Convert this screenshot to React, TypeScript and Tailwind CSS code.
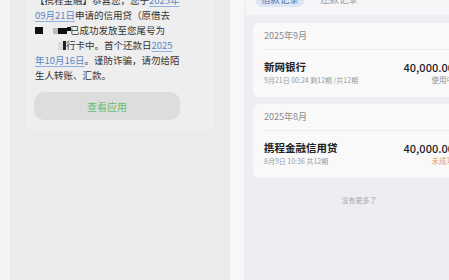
import React from "react";

const font = { fontFamily: '"Noto Sans CJK SC", "Noto Sans", sans-serif' };

function Link({ children }: { children: React.ReactNode }) {
  return <span className="text-[#5a86c9] underline decoration-[#8fb0de] underline-offset-2">{children}</span>;
}

function Block({ w, h, c, mt }: { w: string; h: string; c: string; mt?: string }) {
  return <span className={`inline-block align-middle ${w} ${h} ${c} ${mt ?? ""}`} />;
}

function RecordCard({
  month,
  name,
  sub,
  status,
  statusClass,
  mt,
}: {
  month: string;
  name: string;
  sub: string;
  status: string;
  statusClass: string;
  mt: string;
}) {
  return (
    <div className={`${mt} w-[212px] rounded-[6px] bg-[#f9f9fa] px-[11px] pb-[11px]`}>
      <div className="flex h-[27px] items-center border-b border-[#ebecef] text-[9px] text-[#8b8b8b]">{month}</div>
      <div className="flex items-center justify-between pt-[10px]">
        <div className="flex flex-col">
          <span className="text-[10.5px] font-bold leading-[14px] text-[#222]">{name}</span>
          <span className="text-[7px] leading-[12px] text-[#9a9a9a]">{sub}</span>
        </div>
        <div className="flex flex-col items-end">
          <span className="text-[11px] font-medium leading-[14px] text-[#1d1d1d]">40,000.00</span>
          <span className={`text-[7.5px] leading-[12px] ${statusClass}`}>{status}</span>
        </div>
      </div>
    </div>
  );
}

export default function App() {
  return (
    <div className="flex h-[280px] w-[449px] overflow-hidden bg-[#f4f4f4]" style={font}>
      <div className="w-[10px] shrink-0 bg-[#f4f4f4]" />
      <div className="w-[220px] shrink-0 bg-[#ebebeb] px-[16px]">
        <div className="-mt-[7px] rounded-b-[10px] border border-t-0 border-[#f0f0f0] bg-[#eeeeee] pb-[10px] pl-[7px] pr-[10px]">
          <div className="pl-[1px] text-[9.5px] leading-[15px] text-[#333]">
            <div>【携程金融】恭喜您，您于<Link>2025年</Link></div>
            <div><Link>09月21日</Link>申请的信用贷（原借去</div>
            <div className="flex items-center">
              <Block w="w-[8px]" h="h-[7px]" c="bg-[#111]" />
              <span className="w-[10px]" />
              <Block w="w-[5px]" h="h-[6px]" c="bg-[#bbb]" />
              <Block w="w-[9px]" h="h-[6px]" c="bg-[#111]" />
              <Block w="w-[4px]" h="h-[4px]" c="bg-[#111]" mt="-mt-[4px]" />
              <span className="-ml-[1px]">已成功发放至您尾号为</span>
            </div>
            <div className="flex items-center pl-[23px]">
              <Block w="w-[5px]" h="h-[8px]" c="bg-[#dcdcdc]" />
              <Block w="w-[3px]" h="h-[9px]" c="bg-[#222]" />
              <span>行卡中。首个还款日<Link>2025</Link></span>
            </div>
            <div><Link>年10月16日</Link>。谨防诈骗，请勿给陌</div>
            <div>生人转账、汇款。</div>
          </div>
          <div className="mt-[9px] flex h-[28px] w-[146px] items-center justify-center rounded-[10px] bg-[#dddddd] text-[10px] text-[#66bd6e]">
            查看应用
          </div>
        </div>
      </div>
      <div className="w-[15px] shrink-0 border-r border-[#ececee] bg-[#f7f7f7]" />
      <div className="flex w-[224px] shrink-0 flex-col bg-[#edeef2]">
        <div className="flex h-[15px] items-start bg-[#f6f6f8] pl-[10px]">
          <div className="-mt-[9px] flex h-[16px] w-[50px] items-center justify-center rounded-full bg-[#dce6f4] text-[9.5px] text-[#4b76b9]">
            借款记录
          </div>
          <div className="-mt-[9px] ml-[15px] flex h-[16px] w-[38px] items-center justify-center text-[9.5px] text-[#9a9a9a]">
            还款记录
          </div>
        </div>
        <div className="flex flex-col pl-[8px] pt-[8px]">
          <RecordCard
            mt="mt-0"
            month="2025年9月"
            name="新网银行"
            sub="9月21日 00:24 剩12期 /共12期"
            status="使用中"
            statusClass="text-[#8f8f8f]"
          />
          <RecordCard
            mt="mt-[7px]"
            month="2025年8月"
            name="携程金融信用贷"
            sub="8月9日 10:36 共12期"
            status="未成功"
            statusClass="text-[#e59a5c]"
          />
          <div className="mt-[16px] w-[212px] text-center text-[7px] leading-[12px] text-[#a8a8a8]">没有更多了</div>
        </div>
      </div>
    </div>
  );
}
